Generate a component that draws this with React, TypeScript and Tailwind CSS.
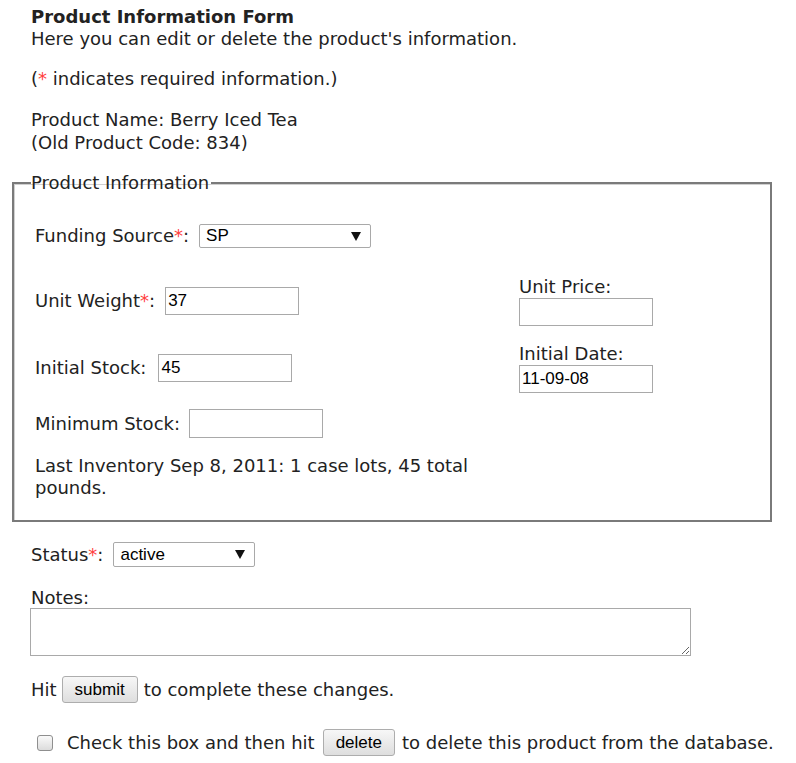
import React from "react";

const verdana = "font-['DejaVu_Sans',Verdana,sans-serif]";
const arial = "font-['Liberation_Sans',Arial,sans-serif]";

function Req() {
    return <span className="text-[#ff4040]">*</span>;
}

function TextBox({ value = "", className = "" }: { value?: string; className?: string }) {
    return (
        <input
            type="text"
            defaultValue={value}
            className={`${arial} h-[28px] w-[134px] border border-[#a9a9a9] bg-white px-[2px] text-[17px] text-black outline-none ${className}`}
        />
    );
}

function SelectBox({ value, width }: { value: string; width: string }) {
    return (
        <div className={`${arial} flex items-center justify-between rounded-[2px] border border-[#a9a9a9] bg-white pl-[6px] pr-[9px] text-[17px] text-black ${width}`}>
            <span>{value}</span>
            <svg width="10" height="9" viewBox="0 0 10 9"><polygon points="0,0 10,0 5,9" fill="#111" /></svg>
        </div>
    );
}

function Btn({ label }: { label: string }) {
    return (
        <button
            type="button"
            className={`${arial} h-[27px] rounded-[3px] border border-[#adadad] bg-gradient-to-b from-[#f7f7f7] to-[#dedede] px-[12px] text-[17px] leading-none text-black`}
        >
            {label}
        </button>
    );
}

export default function App() {
    return (
        <div className={`${verdana} min-h-[763px] w-[796px] bg-white pt-[6px] text-[18px] leading-[22px] text-[#222]`}>
            {/* Header text */}
            <div className="pl-[31px]">
                <div className="font-bold">Product Information Form</div>
                <div>Here you can edit or delete the product's information.</div>
                <p className="mt-[18px]">
                    (<Req /> indicates required information.)
                </p>
                <p className="mt-[18px] leading-[23px]">
                    Product Name: Berry Iced Tea
                    <br />
                    (Old Product Code: 834)
                </p>
            </div>

            {/* Fieldset */}
            <fieldset className="mt-[18px] ml-[12px] w-[760px] border-2 border-[#7a7a7a] pl-[17px] pb-[21px] shadow-[inset_1px_1px_0_#d0d0d0]">
                <legend className="px-0 pr-[2px] leading-[22px]">Product Information</legend>

                <div className="ml-[4px] mt-[30px] flex h-[24px] items-center gap-[10px]">
                    <span>
                        Funding Source<Req />:
                    </span>
                    <SelectBox value="SP" width="h-[24px] w-[172px]" />
                </div>

                <div className="ml-[4px] mt-[28px] flex items-center">
                    <div className="flex w-[484px] items-center gap-[10px]">
                        <span>
                            Unit Weight<Req />:
                        </span>
                        <TextBox value="37" />
                    </div>
                    <div className="flex flex-col">
                        <span>Unit Price:</span>
                        <TextBox />
                    </div>
                </div>

                <div className="ml-[4px] mt-[17px] flex items-center">
                    <div className="flex w-[484px] items-center gap-[12px]">
                        <span>Initial Stock:</span>
                        <TextBox value="45" />
                    </div>
                    <div className="flex flex-col">
                        <span>Initial Date:</span>
                        <TextBox value="11-09-08" />
                    </div>
                </div>

                <div className="ml-[4px] mt-[16px] flex items-center gap-[9px]">
                    <span>Minimum Stock:</span>
                    <TextBox className="h-[29px]" />
                </div>

                <p className="ml-[4px] mt-[17px] w-[470px]">
                    Last Inventory Sep 8, 2011: 1 case lots, 45 total pounds.
                </p>
            </fieldset>

            {/* Below fieldset */}
            <div className="pl-[31px]">
                <div className="mt-[20px] flex items-center gap-[10px]">
                    <span>
                        Status<Req />:
                    </span>
                    <SelectBox value="active" width="h-[25px] w-[142px]" />
                </div>

                <div className="mt-[20px]">Notes:</div>
                <textarea className="-ml-px -mt-px block h-[48px] w-[661px] border border-[#a9a9a9] bg-white outline-none" />

                <div className="mt-[20px] flex items-center">
                    <span className="mr-[5px]">Hit</span>
                    <Btn label="submit" />
                    <span className="ml-[6px]">to complete these changes.</span>
                </div>

                <div className="mt-[26px] flex items-center">
                    <span className="ml-[6px] mr-[14px] inline-block h-[16px] w-[16px] rounded-[3px] border border-[#8f8f8f] bg-gradient-to-b from-[#fafafa] to-[#dcdcdc]" />
                    <span>Check this box and then hit</span>
                    <span className="ml-[8px] mr-[7px]">
                        <Btn label="delete" />
                    </span>
                    <span>to delete this product from the database.</span>
                </div>
            </div>
        </div>
    );
}
